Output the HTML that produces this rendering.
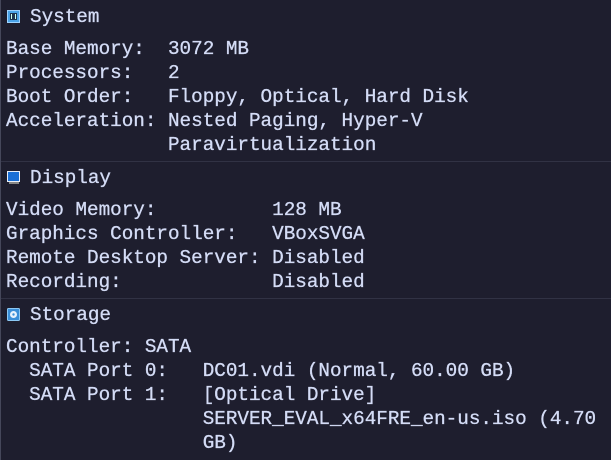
<!DOCTYPE html>
<html><head><style>
html,body{margin:0;padding:0;background:#1e1e2e;}
body{width:611px;height:460px;position:relative;overflow:hidden;font-family:"Liberation Mono","DejaVu Sans Mono",monospace;font-size:19.3px;color:#d4dcf6;border-left:1px solid #45475a;box-sizing:border-box;-webkit-text-stroke:0.3px #d4dcf6;}
.l{position:absolute;left:5px;white-space:pre;line-height:24px;height:24px;}
.sep{position:absolute;left:0;width:611px;height:1px;background:#313244;}
.ic{position:absolute;left:6px;width:13px;height:13px;}
</style></head><body>
<svg class="ic" style="top:10px" viewBox="0 0 13 13"><rect x="0.5" y="0.5" width="12" height="12" fill="#4aa3e8" stroke="#9fd3ff"/><rect x="3" y="3" width="7" height="7" fill="#1e3550"/><rect x="4" y="4" width="1" height="5" fill="#cfe"/><rect x="8" y="4" width="1" height="5" fill="#cfe"/></svg>
<div class="l" style="top:5px;left:29px">System</div>
<div class="l" style="top:37px">Base Memory:  3072 MB</div>
<div class="l" style="top:61px">Processors:   2</div>
<div class="l" style="top:85px">Boot Order:   Floppy, Optical, Hard Disk</div>
<div class="l" style="top:109px">Acceleration: Nested Paging, Hyper-V</div>
<div class="l" style="top:133px">              Paravirtualization</div>
<div class="sep" style="top:161px"></div>
<svg class="ic" style="top:171px" viewBox="0 0 13 13"><rect x="0.5" y="0.5" width="12" height="10" fill="#1a6fd6" stroke="#e8eef8"/><rect x="2" y="11" width="10" height="2" fill="#888"/></svg>
<div class="l" style="top:166px;left:29px">Display</div>
<div class="l" style="top:198px">Video Memory:          128 MB</div>
<div class="l" style="top:222px">Graphics Controller:   VBoxSVGA</div>
<div class="l" style="top:246px">Remote Desktop Server: Disabled</div>
<div class="l" style="top:270px">Recording:             Disabled</div>
<div class="sep" style="top:298px"></div>
<svg class="ic" style="top:308px" viewBox="0 0 13 13"><rect x="0.5" y="0.5" width="12" height="12" rx="1" fill="#3a8fd8" stroke="#8cc8f4"/><circle cx="6.5" cy="6.5" r="3.5" fill="#e8f2fc"/><circle cx="6.5" cy="6.5" r="1.2" fill="#3a8fd8"/></svg>
<div class="l" style="top:303px;left:29px">Storage</div>
<div class="l" style="top:335px">Controller: SATA</div>
<div class="l" style="top:359px">  SATA Port 0:   DC01.vdi (Normal, 60.00 GB)</div>
<div class="l" style="top:383px">  SATA Port 1:   [Optical Drive]</div>
<div class="l" style="top:407px">                 SERVER_EVAL_x64FRE_en-us.iso (4.70</div>
<div class="l" style="top:431px">                 GB)</div>
</body></html>
